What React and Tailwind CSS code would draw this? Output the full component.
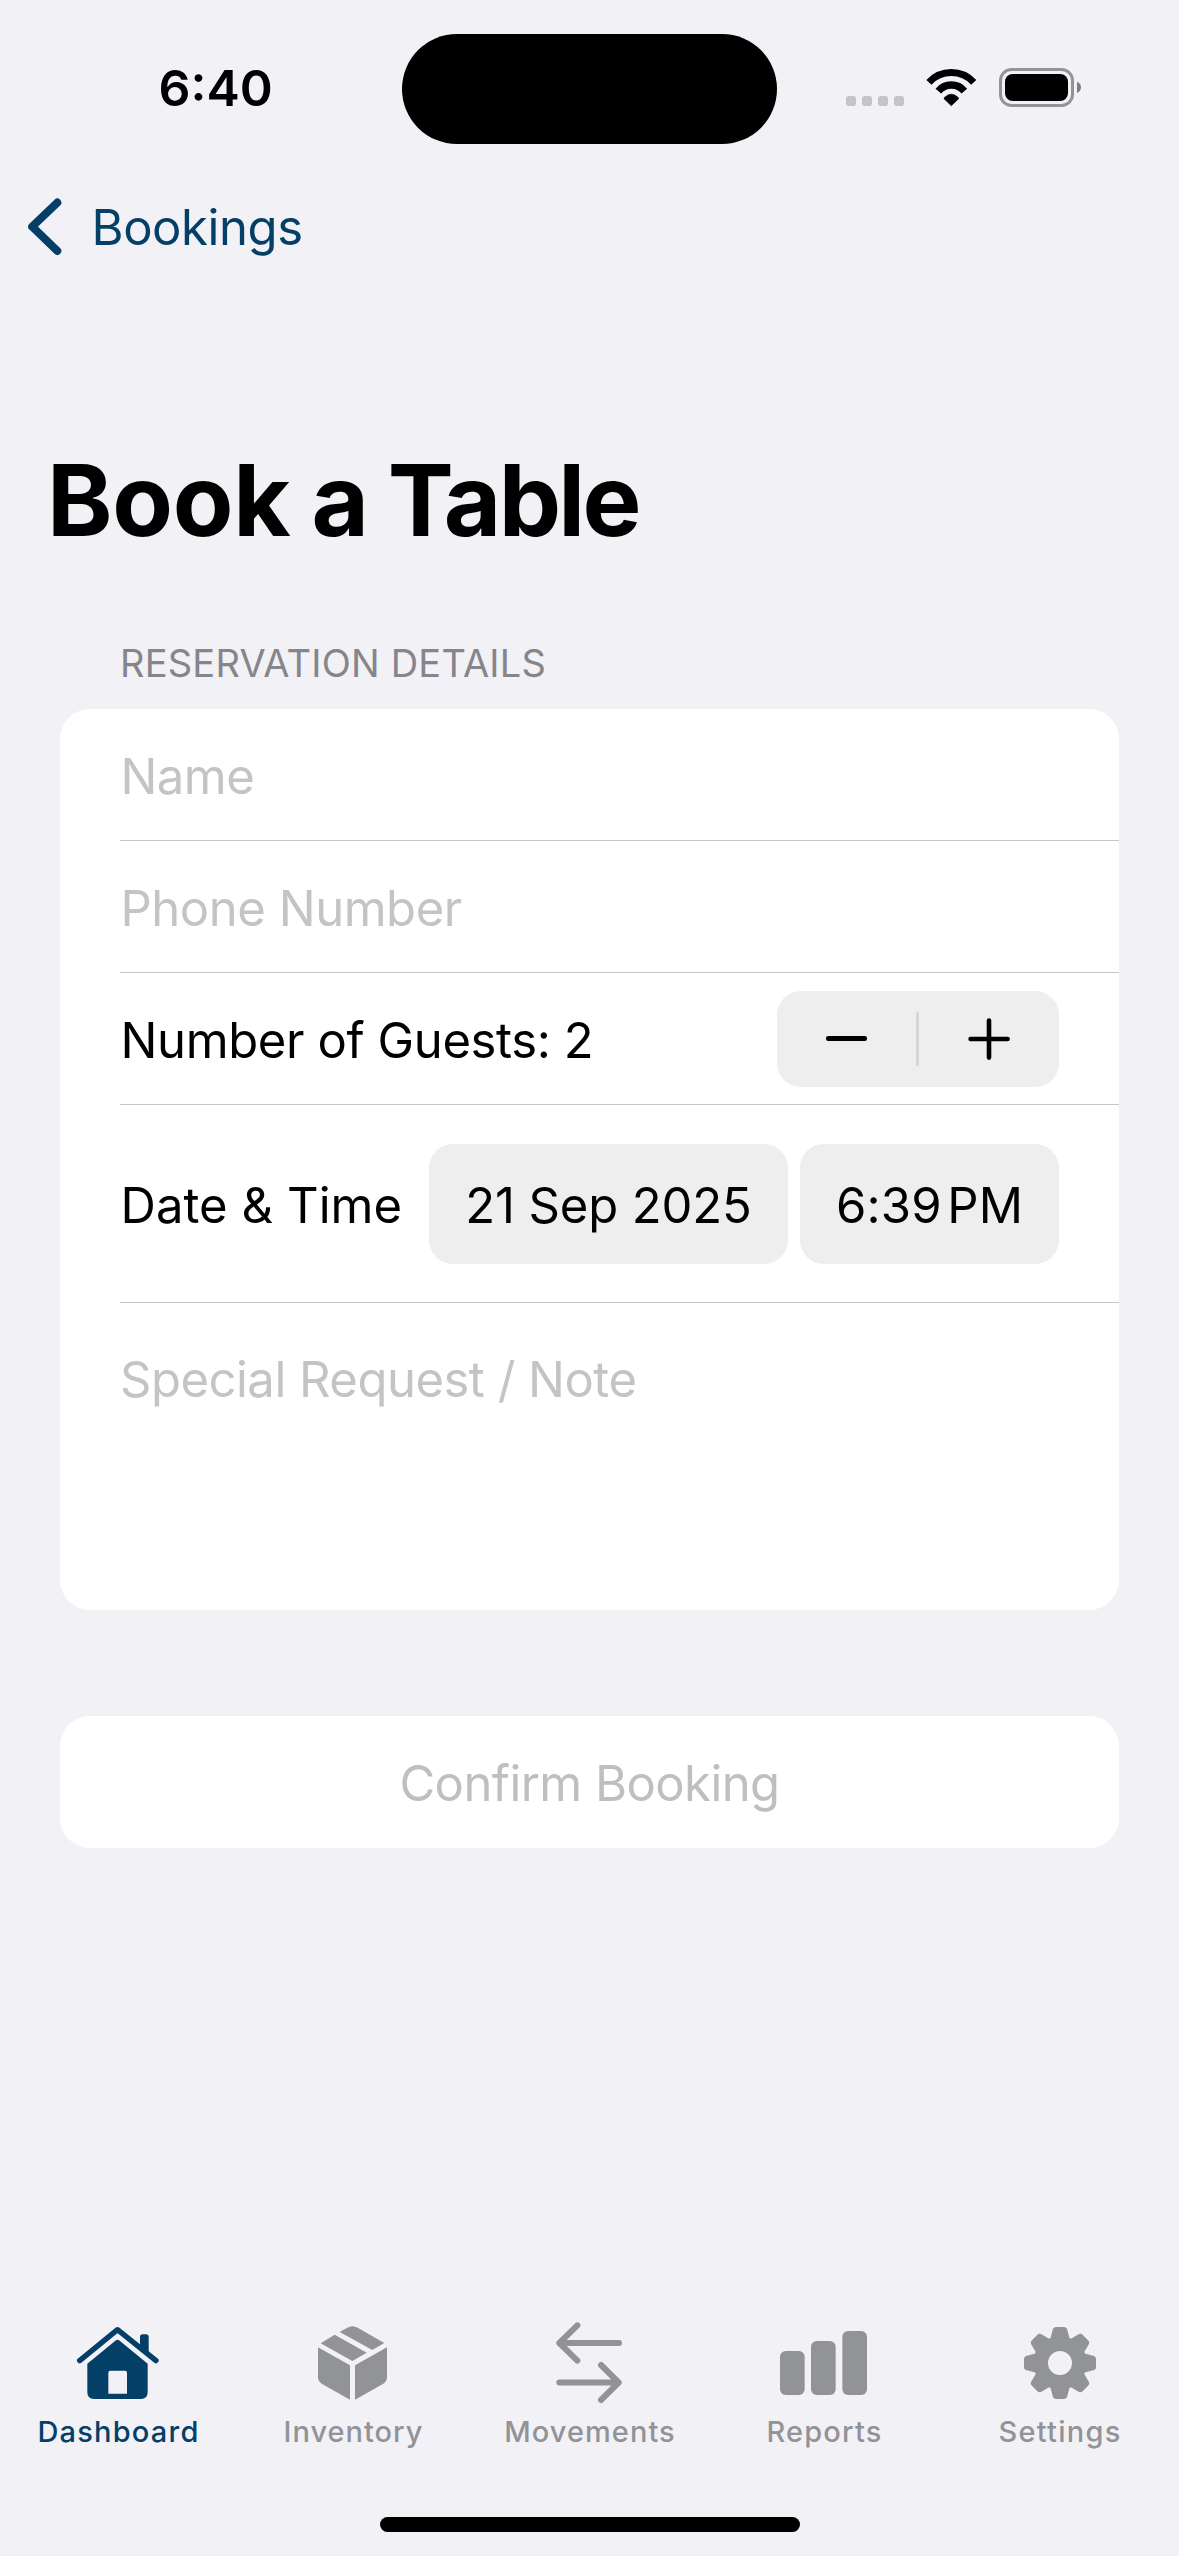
function StatusBar() {
  return (
    <div className="flex h-[178px] shrink-0 items-start">
      <div className="mt-[58px] w-[402px] pl-[158.5px] text-[50px] leading-[60px] font-semibold">6:40</div>
      <div className="mt-[34px] h-[110px] w-[375px] rounded-full bg-black" />
      <div className="mt-[68px] ml-[69px] flex h-[39px] items-end">
        <div className="mb-px flex gap-[6px]">
          {[0, 1, 2, 3].map((dot) => (
            <span key={dot} className="size-[10px] rounded-[3px] bg-[#c4c3c8]" />
          ))}
        </div>
        <svg className="ml-[21px] h-[39px] w-[53px]" viewBox="435 144 159 117" fill="none" stroke="#000">
          <path d="M446.8 187A91.5 91.5 0 0 1 581.2 187" strokeWidth="21" />
          <path d="M475 213.2A51 51 0 0 1 553 213.2" strokeWidth="22" />
          <path d="M492 236Q492 234 494 232Q514 213 534 232Q536 234 536 236L514 257Z" fill="#000" strokeWidth="2" strokeLinejoin="round" />
        </svg>
        <svg className="ml-[21px] h-[39px] w-[83px]" viewBox="657 144 249 117">
          <rect x="661.5" y="148.5" width="216" height="108" rx="33" fill="none" stroke="#949497" strokeWidth="9" />
          <rect x="675" y="162" width="189" height="81" rx="23" />
          <path d="M891 185Q903 190 903 202T891 219Z" fill="#7f7f82" />
        </svg>
      </div>
    </div>
  );
}

function NavBar() {
  return (
    <div className="flex h-[98px] shrink-0 items-center pl-7 text-[#043f67]">
      <svg className="h-[58px] w-[34px]" viewBox="0 0 34 58" fill="none" stroke="currentColor" strokeWidth="8" strokeLinecap="round" strokeLinejoin="round">
        <path d="M29.3 4.6L4.2 28.7L29.3 52.9" />
      </svg>
      <span className="ml-[29.5px] pt-px text-[49px] leading-[60px] tracking-[-0.42px]">Bookings</span>
    </div>
  );
}

function Row({ className = "", children }) {
  return (
    <div className="pl-[60px]">
      <div className={`flex items-center border-b border-[#c6c6c8] pr-[60px] ${className}`}>{children}</div>
    </div>
  );
}

function Stepper() {
  return (
    <div className="ml-auto flex h-24 w-[282px] items-center rounded-[24px] bg-[#eeeeef]">
      <div className="flex w-[139px] justify-center">
        <svg className="h-[5px] w-[41px]" viewBox="0 0 41 5">
          <rect width="41" height="5" rx="2.2" />
        </svg>
      </div>
      <div className="h-[54px] w-[3px] rounded-full bg-[#d6d6d7]" />
      <div className="flex w-[140px] justify-center pt-px">
        <svg className="h-[42px] w-[42px]" viewBox="0 0 42 42" stroke="#000" strokeWidth="4.6" strokeLinecap="round">
          <path d="M21 2.6V39.6M2.6 21H39.6" />
        </svg>
      </div>
    </div>
  );
}

function Form() {
  return (
    <div className="mx-[60px] mt-[22px] shrink-0 rounded-[30px] bg-white text-[49px] leading-[60px]">
      <Row className="h-[132px] text-[#c4c4c6]">
        <span className="pt-1 pl-[0.5px] tracking-[-0.55px]">Name</span>
      </Row>
      <Row className="h-[132px] text-[#c4c4c6]">
        <span className="pt-1 pl-[0.5px] tracking-[-0.46px]">Phone Number</span>
      </Row>
      <Row className="h-[132px]">
        <span className="pt-1 pl-[0.5px] tracking-[-0.38px]">Number of Guests: 2</span>
        <Stepper />
      </Row>
      <Row className="h-[198px]">
        <span className="pt-1 pl-[0.5px] tracking-[0.05px]">Date &amp; Time</span>
        <div className="ml-auto flex gap-3">
          <div className="flex h-[120px] w-[359px] items-center justify-center rounded-[24px] bg-[#eeeeef] pt-1 tracking-[-0.12px]">21 Sep 2025</div>
          <div className="flex h-[120px] w-[259px] items-center justify-center gap-[5.5px] rounded-[24px] bg-[#eeeeef] pt-1 tracking-[0.15px]">
            <span>6:39</span>
            <span>PM</span>
          </div>
        </div>
      </Row>
      <div className="h-[307px] px-[60px] pt-[47px] tracking-[-0.5px] text-[#c4c4c6]">Special Request / Note</div>
    </div>
  );
}

function HomeIcon() {
  return (
    <svg className="h-[84px] w-[85px]" viewBox="225 60 255 252" fill="currentColor">
      <path d="M239 182L352.500 89L468 182" fill="none" stroke="currentColor" strokeWidth="16" strokeLinecap="round" strokeLinejoin="round" />
      <path d="M420 135V111Q420 103 428 103H438Q446 103 446 111V160Z" />
      <path fillRule="evenodd" d="M262 191L346 122Q352.500 117 359 122L443 191V277Q443 297 423 297H282Q262 297 262 277ZM331 212Q325 212 325 218V281H381V218Q381 212 375 212Z" />
    </svg>
  );
}

function BoxIcon() {
  return (
    <svg className="h-[84px] w-[85px]" viewBox="930 60 255 252" fill="currentColor">
      <path d="M1019 96L1042 83Q1057 74 1073 83L1153 129L1117 150Z" />
      <path d="M1004 104L1100 158L1057 183L962 130Z" />
      <path d="M954 142L1050 196V299L965 251Q954 244 954 232Z" />
      <path d="M1161 142L1065 196V299L1150 251Q1161 244 1161 232Z" />
    </svg>
  );
}

function ArrowsIcon() {
  return (
    <svg className="h-[84px] w-[86px]" viewBox="438 60 258 252" fill="none" stroke="currentColor" strokeWidth="18" strokeLinecap="round" strokeLinejoin="round">
      <path d="M657 129H478M532 76L478 129L532 182" />
      <path d="M478 247.500H656M603 195L656 247.500L603 300" />
    </svg>
  );
}

function BarsIcon() {
  return (
    <svg className="h-[84px] w-[89px]" viewBox="0 60 267 252" fill="currentColor">
      <rect x="3" y="153" width="74" height="132" rx="17" />
      <rect x="96" y="123" width="74" height="162" rx="17" />
      <rect x="190" y="93" width="74" height="192" rx="17" />
    </svg>
  );
}

function GearIcon() {
  return (
    <svg className="h-[84px] w-[86px]" viewBox="711 60 258 252" fill="currentColor">
      <g transform="translate(843 189)">
        <circle r="58" fill="none" stroke="currentColor" strokeWidth="44" />
        {[0, 45, 90, 135, 180, 225, 270, 315].map((angle) => (
          <path key={angle} transform={`rotate(${angle})`} d="M-29 -72L-22 -99Q-20 -108 -11 -108H11Q20 -108 22 -99L29 -72Z" />
        ))}
      </g>
    </svg>
  );
}

const tabs = [
  { label: "Dashboard", Icon: HomeIcon, style: "text-[#043f67] tracking-[1.2px]" },
  { label: "Inventory", Icon: BoxIcon, style: "text-[#929397] tracking-[1px]" },
  { label: "Movements", Icon: ArrowsIcon, style: "text-[#929397] tracking-[1.05px]" },
  { label: "Reports", Icon: BarsIcon, style: "text-[#929397] tracking-[1.2px]" },
  { label: "Settings", Icon: GearIcon, style: "text-[#929397] tracking-[1.25px]" },
];

function TabBar() {
  return (
    <div className="mt-auto flex shrink-0 flex-col items-center pb-6">
      <div className="grid h-[197px] w-full grid-cols-[235px_235px_238px_231px_240px]">
        {tabs.map(({ label, Icon, style }) => (
          <div key={label} className={`flex flex-col items-center ${style}`}>
            <Icon />
            <span className="mt-[10px] pl-[2px] text-[29px] leading-[35px] font-[450]">{label}</span>
          </div>
        ))}
      </div>
      <div className="h-[15px] w-[420px] rounded-full bg-black" />
    </div>
  );
}

export default function App() {
  return (
    <div className="flex h-[2556px] w-[1179px] flex-col overflow-hidden bg-[#f2f1f6] font-['Inter',sans-serif] text-black">
      <StatusBar />
      <NavBar />
      <h1 className="mt-[164px] shrink-0 pl-[47px] text-[99px] leading-[120px] font-bold tracking-[-2.4px]">
        <span className="tracking-[-0.2px]">Book</span> a <span className="tracking-[-2.7px]">Table</span>
      </h1>
      <div className="mt-20 shrink-0 pl-[120px] text-[38px] leading-[47px] tracking-[0.22px] text-[#86858b]">RESERVATION DETAILS</div>
      <Form />
      <div className="mx-[60px] mt-[106px] flex h-[132px] shrink-0 items-center justify-center rounded-[30px] bg-white pt-[3px] text-[49px] leading-[60px] tracking-[-0.56px] text-[#bfbfbf]">
        Confirm Booking
      </div>
      <TabBar />
    </div>
  );
}
